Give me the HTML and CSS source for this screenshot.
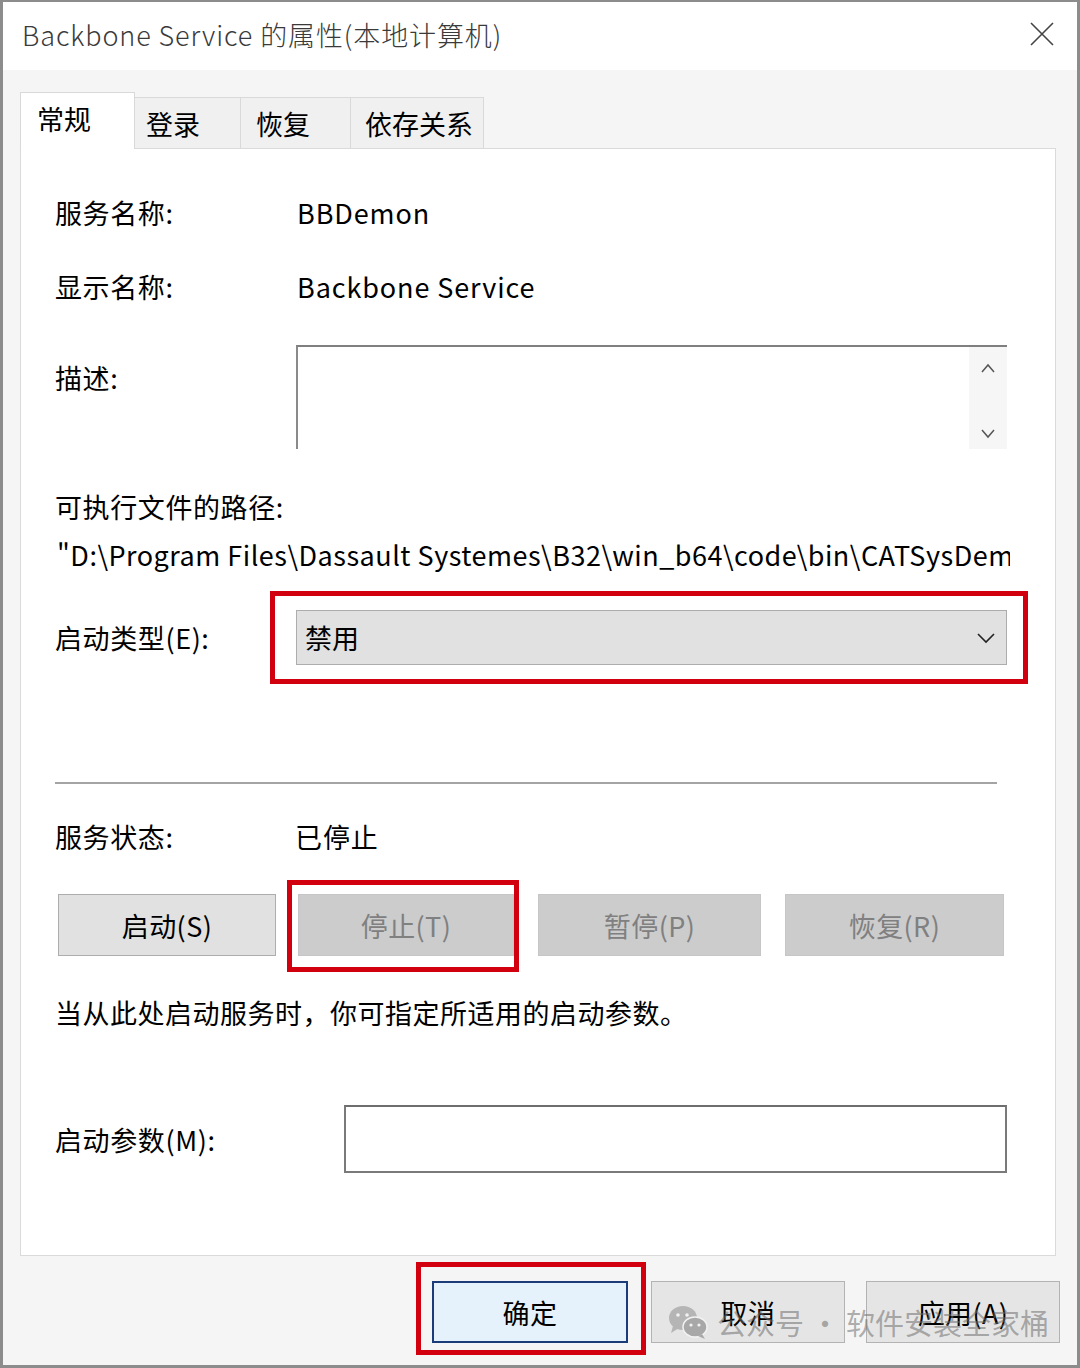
FILE: index.html
```html
<!DOCTYPE html>
<html lang="zh-CN">

<head>
  <meta charset="UTF-8">
  <title>Backbone Service 的属性(本地计算机)</title>
  <link rel="stylesheet" href="styles.css">
</head>

<body>
  <div class="window">

    <div class="title-bar">
      <span class="title">Backbone Service 的属性(本地计算机)</span>
      <svg class="close" width="26" height="26" viewBox="0 0 26 26">
        <path d="M2 2 L24 24 M24 2 L2 24" stroke="#444" stroke-width="1.6" fill="none" />
      </svg>
    </div>

    <div class="client">

      <div class="tabs">
        <div class="tab active">常规</div>
        <div class="tab">登录</div>
        <div class="tab">恢复</div>
        <div class="tab">依存关系</div>
      </div>

      <div class="panel">

        <div class="row">
          <span class="label">服务名称:</span>
          <span class="value">BBDemon</span>
        </div>

        <div class="row row-gap">
          <span class="label">显示名称:</span>
          <span class="value">Backbone Service</span>
        </div>

        <div class="row row-desc">
          <span class="label desc-label">描述:</span>
          <div class="desc-box">
            <div class="desc-scroll">
              <svg width="16" height="12" viewBox="0 0 16 12">
                <path d="M2 10 L8 3 L14 10" stroke="#555" stroke-width="1.5" fill="none" />
              </svg>
              <svg width="16" height="12" viewBox="0 0 16 12">
                <path d="M2 2 L8 9 L14 2" stroke="#555" stroke-width="1.5" fill="none" />
              </svg>
            </div>
          </div>
        </div>

        <div class="path-label">可执行文件的路径:</div>
        <div class="path">"D:\Program Files\Dassault Systemes\B32\win_b64\code\bin\CATSysDemon.exe"</div>

        <div class="row row-type">
          <span class="label">启动类型(E):</span>
          <div class="select mark-select">
            <span>禁用</span>
            <svg width="20" height="14" viewBox="0 0 20 14">
              <path d="M2 3 L10 11 L18 3" stroke="#222" stroke-width="1.6" fill="none" />
            </svg>
          </div>
        </div>

        <hr class="sep">

        <div class="row row-status">
          <span class="label">服务状态:</span>
          <span class="value status">已停止</span>
        </div>

        <div class="svc-buttons">
          <button class="btn">启动(S)</button>
          <button class="btn disabled mark-stop">停止(T)</button>
          <button class="btn disabled">暂停(P)</button>
          <button class="btn disabled">恢复(R)</button>
        </div>

        <div class="hint">当从此处启动服务时，你可指定所适用的启动参数。</div>

        <div class="row row-param">
          <span class="label">启动参数(M):</span>
          <div class="param-input"></div>
        </div>

      </div>

      <div class="footer">
        <button class="btn fbtn default mark-ok">确定</button>
        <button class="btn fbtn">取消</button>
        <button class="btn fbtn">应用(A)</button>

        <div class="watermark">
          <svg width="42" height="38" viewBox="0 0 42 38">
            <ellipse cx="16" cy="15" rx="14" ry="12" fill="#b5b5b5" />
            <path d="M6 23 L4 30 L12 25 Z" fill="#b5b5b5" />
            <circle cx="11" cy="12" r="1.8" fill="#f2f2f2" />
            <circle cx="20" cy="12" r="1.8" fill="#f2f2f2" />
            <ellipse cx="28" cy="24" rx="12" ry="10" fill="#a8a8a8" stroke="#f2f2f2" stroke-width="1.5" />
            <path d="M35 31 L38 36 L31 33 Z" fill="#a8a8a8" />
            <circle cx="24" cy="22" r="1.6" fill="#f2f2f2" />
            <circle cx="32" cy="22" r="1.6" fill="#f2f2f2" />
          </svg>
          <span>公众号 · 软件安装全家桶</span>
        </div>
      </div>

    </div>
  </div>
</body>

</html>
```

FILE: styles.css
```css
* {
  box-sizing: border-box;
}

body {
  margin: 0;
  font-family: "Noto Sans CJK SC", "Noto Sans", sans-serif;
  color: #000;
  background: #fff;
}

.window {
  width: 1080px;
  height: 1368px;
  border: 3px solid #8c8c8c;
  border-top-width: 2px;
  background: #f5f5f5;
  display: flex;
  flex-direction: column;
}

/* title */
.title-bar {
  height: 68px;
  background: #fff;
  display: flex;
  align-items: center;
  justify-content: space-between;
  padding: 0 22px 4px 19px;
}

.title {
  font-size: 27px;
  color: #3a3a3a;
  font-weight: 300;
  letter-spacing: 0.9px;
}

.close {
  margin-top: 0;
}

/* tabs + panel */
.client {
  flex: 1;
  padding: 22px 21px 0 17px;
  position: relative;
}

.tabs {
  display: flex;
  align-items: flex-end;
  height: 56px;
}

.tab {
  height: 51px;
  border: 1px solid #d9d9d9;
  border-bottom: 0;
  border-left: 0;
  background: #f0f0f0;
  font-size: 27px;
  display: flex;
  align-items: center;
  padding-left: 14px;
  width: 110px;
}

.tab:nth-child(2) {
  width: 106px;
  padding-left: 11px;
}

.tab:nth-child(3) {
  padding-left: 15px;
}

.tab:nth-child(4) {
  width: 133px;
}

.tab.active {
  height: 57px;
  width: 115px;
  background: #fff;
  border-left: 1px solid #d9d9d9;
  padding-bottom: 6px;
  padding-left: 16px;
  margin-bottom: -1px;
  position: relative;
  z-index: 1;
}

.panel {
  background: #fff;
  border: 1px solid #dadada;
  height: 1108px;
  padding: 43px 48px 0 34px;
}

.row {
  display: flex;
  align-items: center;
  height: 40px;
  font-size: 27px;
}

.label {
  width: 242px;
  flex: none;
  font-size: 27px;
  letter-spacing: 0.6px;
}

.value {
  font-size: 27px;
  letter-spacing: 0.9px;
}

.row-gap {
  margin-top: 34px;
}

.row-desc {
  margin-top: 39px;
  height: 104px;
  align-items: flex-start;
}

.desc-label {
  padding-top: 13px;
}

.desc-box {
  flex: 1;
  height: 104px;
  border-top: 2px solid #7f7f7f;
  border-left: 2px solid #8a8a8a;
  margin-left: -1px;
  display: flex;
  justify-content: flex-end;
}

.desc-scroll {
  width: 38px;
  background: #f6f6f6;
  display: flex;
  flex-direction: column;
  align-items: center;
  justify-content: space-between;
  padding: 15px 0 9px;
}

.path-label {
  margin-top: 38px;
  font-size: 27px;
  letter-spacing: 0.6px;
  line-height: 40px;
}

.path {
  margin-top: 8px;
  font-size: 27px;
  letter-spacing: 0.5px;
  line-height: 40px;
  white-space: nowrap;
  overflow: hidden;
  margin-right: -3px;
  padding-left: 2px;
}

.row-type {
  margin-top: 35px;
  height: 55px;
}

.select {
  flex: 1;
  height: 55px;
  background: #e1e1e1;
  border: 1px solid #adadad;
  display: flex;
  align-items: center;
  justify-content: space-between;
  padding: 0 10px 0 8px;
  font-size: 27px;
  margin-left: -1px;
}

.mark-select,
.mark-stop,
.mark-ok {
  position: relative;
}

.mark-select::after,
.mark-stop::after,
.mark-ok::after {
  content: "";
  position: absolute;
  border: 5px solid #d2000f;
  pointer-events: none;
}

.mark-select::after {
  top: -20px;
  bottom: -20px;
  left: -27px;
  right: -22px;
}

.sep {
  margin: 117px 10px 0 0;
  border: 0;
  border-top: 2px solid #a4a4a4;
  height: 0;
}

.row-status {
  margin-top: 32px;
}

.status {
  margin-left: -2px;
}

.svc-buttons {
  margin-top: 38px;
  display: grid;
  grid-template-columns: 218px 214px 223px 219px;
  column-gap: 24px;
  margin-left: 3px;
  margin-right: 2px;
}

.btn {
  font-family: inherit;
  height: 62px;
  background: #e1e1e1;
  border: 1px solid #adadad;
  font-size: 27px;
  letter-spacing: 0.4px;
  color: #000;
  padding: 0;
}

.btn.disabled {
  background: #cccccc;
  border-color: #c6c6c6;
  color: #808080;
}

.svc-buttons .btn:nth-child(2) {
  margin-left: -2px;
}

.mark-stop::after {
  top: -15px;
  bottom: -17px;
  left: -12px;
  right: -6px;
}

.hint {
  margin-top: 37px;
  font-size: 27px;
  letter-spacing: 0.5px;
  line-height: 40px;
}

.row-param {
  margin-top: 72px;
  height: 68px;
}

.param-input {
  flex: 1;
  height: 68px;
  margin-left: 47px;
  border: 2px solid #7a7a7a;
  border-top-color: #6e6e6e;
  background: #fff;
}

/* footer */
.footer {
  display: flex;
  justify-content: flex-end;
  padding-top: 25px;
  margin-right: -4px;
  position: relative;
}

.fbtn {
  width: 194px;
  margin-left: 21px;
  background: #e5e5e5;
  border-color: #b3b3b3;
}

.fbtn.default {
  width: 196px;
  background: #e5f1fb;
  border: 2px solid #1b3c78;
}

.fbtn:nth-child(2) {
  margin-left: 23px;
}

.mark-ok::after {
  top: -21px;
  bottom: -14px;
  left: -18px;
  right: -20px;
}

.watermark {
  position: absolute;
  left: 647px;
  top: 45px;
  display: flex;
  align-items: center;
  gap: 8px;
  color: rgba(110, 110, 110, 0.55);
  font-size: 29px;
  pointer-events: none;
}
```
